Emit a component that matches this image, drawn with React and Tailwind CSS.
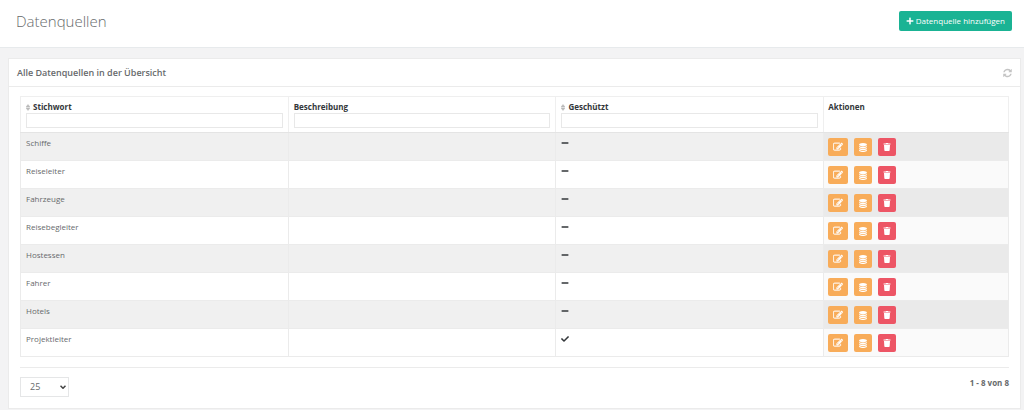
import React from "react";
import { FaPlus, FaMinus, FaCheck, FaTrash } from "react-icons/fa";

const sources = [
  { name: "Schiffe", locked: false },
  { name: "Reiseleiter", locked: false },
  { name: "Fahrzeuge", locked: false },
  { name: "Reisebegleiter", locked: false },
  { name: "Hostessen", locked: false },
  { name: "Fahrer", locked: false },
  { name: "Hotels", locked: false },
  { name: "Projektleiter", locked: true },
];

function EditIcon() {
  return (
    <svg viewBox="0 0 1792 1792" className="size-[10px]" fill="currentColor" stroke="currentColor" strokeWidth="50" aria-hidden="true">
      <path d="M888 1184l116-116-152-152-116 116v56h96v96h56zm440-720q-16-16-33 1l-350 350q-17 17-1 33t33-1l350-350q17-17 1-33zm80 594v190q0 119-84.5 203.5t-203.5 84.5h-832q-119 0-203.5-84.5t-84.5-203.5v-832q0-119 84.5-203.5t203.5-84.5h832q63 0 117 25 15 7 18 23 3 17-9 29l-49 49q-14 14-32 8-23-6-45-6h-832q-66 0-113 47t-47 113v832q0 66 47 113t113 47h832q66 0 113-47t47-113v-126q0-13 9-22l64-64q15-15 35-7t20 29zm-96-738l288 288-672 672h-288v-288zm444 132l-92 92-288-288 92-92q28-28 68-28t68 28l152 152q28 28 28 68t-28 68z" />
    </svg>
  );
}

function DatabaseIcon() {
  return (
    <svg viewBox="0 0 1536 1792" className="h-[9px] w-2" fill="currentColor" aria-hidden="true">
      <path d="M768 768q237 0 443-43t325-127v170q0 69-103 128t-280 93.5-385 34.5-385-34.5-280-93.5-103-128v-170q119 84 325 127t443 43zm0 768q237 0 443-43t325-127v170q0 69-103 128t-280 93.5-385 34.5-385-34.5-280-93.5-103-128v-170q119 84 325 127t443 43zm0-384q237 0 443-43t325-127v170q0 69-103 128t-280 93.5-385 34.5-385-34.5-280-93.5-103-128v-170q119 84 325 127t443 43zm0-1152q208 0 385 34.5t280 93.5 103 128v128q0 69-103 128t-280 93.5-385 34.5-385-34.5-280-93.5-103-128v-128q0-69 103-128t280-93.5 385-34.5z" />
    </svg>
  );
}

function RefreshIcon() {
  return (
    <svg viewBox="0 0 1536 1792" className="h-[10px] w-[9px]" fill="currentColor" aria-hidden="true">
      <path d="M1511 1056q0 5-1 7-64 268-268 434.5t-478 166.5q-146 0-282.5-55t-243.5-157l-129 129q-19 19-45 19t-45-19-19-45v-448q0-26 19-45t45-19h448q26 0 45 19t19 45-19 45l-137 137q71 66 161 102t187 36q134 0 250-65t186-179q11-17 53-117 8-23 30-23h192q13 0 22.5 9.5t9.5 22.5zm25-800v448q0 26-19 45t-45 19h-448q-26 0-45-19t-19-45 19-45l138-138q-148-137-349-137-134 0-250 65t-186 179q-11 17-53 117-8 23-30 23h-199q-13 0-22.5-9.5t-9.5-22.5v-7q65-268 270-434.5t480-166.5q146 0 284 55.5t245 156.5l130-129q19-19 45-19t45 19 19 45z" />
    </svg>
  );
}

function SortIcon() {
  return (
    <svg viewBox="0 0 8 12" className="h-[7px] w-1" fill="currentColor" stroke="currentColor" strokeWidth="1" aria-hidden="true">
      <path d="M4 0 8 5H0zM0 7h8l-4 5z" />
    </svg>
  );
}

function ColumnHead({ label, id, sortable }) {
  return (
    <th scope="col" className="border border-[#efefef] border-b-[#e4e4e4] px-[5px] pt-1 pb-1 text-left align-top font-bold">
      <div className="flex h-3 items-center gap-[3px]">
        {sortable && (
          <button type="button" aria-label={`${label} sortieren`} className="text-[#b9b9b9]">
            <SortIcon />
          </button>
        )}
        <label htmlFor={id}>{label}</label>
      </div>
      <input id={id} type="text" className="block h-[15px] w-full border border-[#e8e8e8] bg-white px-1 font-normal outline-none" />
    </th>
  );
}

function Row({ source, striped }) {
  return (
    <tr className={striped ? "bg-[#f0f0f0]" : "bg-white"}>
      <td className="border border-[#ebebeb] px-[5px] pt-1">{source.name}</td>
      <td className="border border-[#ebebeb]"></td>
      <td className="border border-[#ebebeb] px-[5px] pt-[6px] text-[#33373a]">
        {source.locked ? <FaCheck className="size-2" title="Ja" /> : <FaMinus className="size-2" title="Nein" />}
      </td>
      <td className={`border border-[#ebebeb] px-1 pt-[5px] pb-1 ${striped ? "bg-[#eaeaea]" : "bg-[#fafafa]"}`}>
        <div className="flex gap-[6px] text-white">
          <button type="button" aria-label={`${source.name} bearbeiten`} className="flex h-[18px] w-5 items-center justify-center rounded-xs bg-[#f8ac59]">
            <EditIcon />
          </button>
          <button type="button" aria-label={`${source.name} Daten`} className="flex size-[18px] items-center justify-center rounded-xs bg-[#f8ac59]">
            <DatabaseIcon />
          </button>
          <button type="button" aria-label={`${source.name} löschen`} className="flex size-[18px] items-center justify-center rounded-xs bg-[#ed5565]">
            <FaTrash className="size-2" />
          </button>
        </div>
      </td>
    </tr>
  );
}

export default function App() {
  return (
    <div className="min-h-screen bg-[#f3f3f4] font-['Open_Sans',sans-serif] text-[8px] leading-3 text-[#676a6c]">
      <header className="flex items-start justify-between border-b border-[#e7eaec] bg-white pt-[11px] pr-3 pb-4 pl-4">
        <h1 className="text-[15px] leading-5 font-light">Datenquellen</h1>
        <button type="button" className="flex h-5 items-center gap-[2px] rounded-xs bg-[#1ab394] px-[7px] text-white">
          <FaPlus className="size-2" />
          Datenquelle hinzufügen
        </button>
      </header>

      <main className="pt-[10px] pr-[3px] pl-2">
        <section className="border border-[#ebebeb] bg-white">
          <div className="flex h-7 items-center justify-between border-b border-[#ebebeb] px-2">
            <h2 className="text-[9px] font-semibold">Alle Datenquellen in der Übersicht</h2>
            <button type="button" aria-label="Aktualisieren" className="text-[#c4c4c4]">
              <RefreshIcon />
            </button>
          </div>

          <div className="px-[11px] pt-[9px] pb-[11px]">
            <table className="w-full table-fixed border-collapse">
              <colgroup>
                <col className="w-[27.1%]" />
                <col className="w-[27.1%]" />
                <col className="w-[27.1%]" />
                <col />
              </colgroup>
              <thead className="text-[#33373a]">
                <tr>
                  <ColumnHead id="filter-stichwort" label="Stichwort" sortable />
                  <ColumnHead id="filter-beschreibung" label="Beschreibung" />
                  <ColumnHead id="filter-geschuetzt" label="Geschützt" sortable />
                  <th scope="col" className="border border-[#efefef] border-b-[#e4e4e4] px-1 pt-1 text-left align-top font-bold">
                    Aktionen
                  </th>
                </tr>
              </thead>
              <tbody className="align-top">
                {sources.map((source, i) => (
                  <Row key={source.name} source={source} striped={i % 2 === 0} />
                ))}
              </tbody>
            </table>

            <div className="mt-[10px] flex items-start justify-between border-t border-[#ebebeb] pt-[9px]">
              <div className="relative">
                <select aria-label="Einträge pro Seite" defaultValue="25" className="block h-5 w-[49px] appearance-none border border-[#e5e6e7] bg-white pl-[9px] text-[9px]">
                  <option>10</option>
                  <option>25</option>
                  <option>50</option>
                </select>
                <svg viewBox="0 0 12 8" className="pointer-events-none absolute top-2 right-[3px] h-1 w-[6px] text-[#444444]" fill="none" stroke="currentColor" strokeWidth="3" aria-hidden="true">
                  <path d="M1 1.5 6 6.5l5-5" />
                </svg>
              </div>
              <p className="font-bold">1 - 8 von 8</p>
            </div>
          </div>
        </section>
      </main>
    </div>
  );
}
